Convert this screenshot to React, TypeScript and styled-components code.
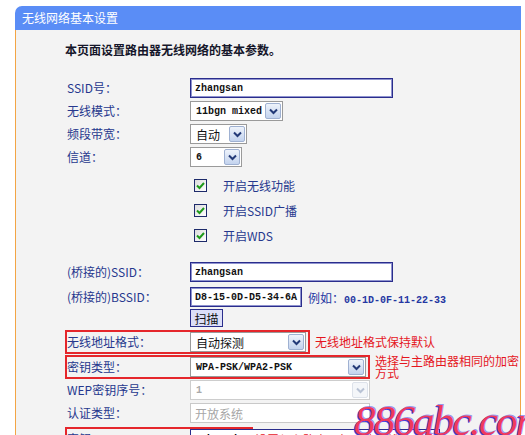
import React from "react";
import styled, {createGlobalStyle} from "styled-components";

const GlobalStyle = createGlobalStyle`
  html, body {
    margin: 0;
    padding: 0;
    background: #ffffff;
    height: 435px;
    overflow: hidden;
  }
`

const CJK = `"Noto Sans CJK SC", "DejaVu Sans", sans-serif`
const MONO = `"Liberation Mono", "DejaVu Sans Mono", monospace`

const Chevron = ({disabled = false}: {disabled?: boolean}) => (
    <svg width="9" height="7" viewBox="0 0 9 7">
        <polyline points="1,1.5 4.5,5 8,1.5" fill="none"
                  stroke={disabled ? "#b8c2d4" : "#233a78"} strokeWidth="2"/>
    </svg>
)

const Check = () => (
    <svg width="11" height="11" viewBox="0 0 11 11">
        <polyline points="2,5.5 4.5,8 9,3" fill="none" stroke="#1f9a1a" strokeWidth="2"/>
    </svg>
)

const Select = ({value, width, disabled = false, mono = false}:
                    {value: string, width: number, disabled?: boolean, mono?: boolean}) => (
    <SelectBox $width={width} $disabled={disabled}>
        <SelectValue $mono={mono} $disabled={disabled}>{value}</SelectValue>
        <ArrowButton $disabled={disabled}><Chevron disabled={disabled}/></ArrowButton>
    </SelectBox>
)

const Row = ({label, children, mark = false, note, noteWidth, mt = 3}:
                 {label: string, children?: React.ReactNode, mark?: boolean,
                     note?: string, noteWidth?: number, mt?: number}) => (
    <RowStyle $mt={mt}>
        <Field $mark={mark}>
            <Label>{label}</Label>
            {children}
        </Field>
        {note && <Note $width={noteWidth}>{note}</Note>}
    </RowStyle>
)

const CheckRow = ({label}: {label: string}) => (
    <CheckRowStyle>
        <CheckBox><Check/></CheckBox>
        <CheckLabel>{label}</CheckLabel>
    </CheckRowStyle>
)

const App = () => {
    return (
        <Page>
            <GlobalStyle/>
            <Panel>
                <Header>无线网络基本设置</Header>
                <Body>
                    <Intro>本页面设置路由器无线网络的基本参数。</Intro>
                    <Form>
                        <Row label="SSID号：" mt={20}>
                            <TextInput $width={203}>zhangsan</TextInput>
                        </Row>
                        <Row label="无线模式：">
                            <Select value="11bgn mixed" width={93} mono/>
                        </Row>
                        <Row label="频段带宽：">
                            <Select value="自动" width={57}/>
                        </Row>
                        <Row label="信道：">
                            <Select value="6" width={52} mono/>
                        </Row>
                        <Checks>
                            <CheckRow label="开启无线功能"/>
                            <CheckRow label="开启SSID广播"/>
                            <CheckRow label="开启WDS"/>
                        </Checks>
                        <Row label="(桥接的)SSID：" mt={15}>
                            <TextInput $width={203}>zhangsan</TextInput>
                        </Row>
                        <Row label="(桥接的)BSSID：" mt={5}>
                            <TextInput $width={112}>D8-15-0D-D5-34-6A</TextInput>
                            <Example>例如：<span>00-1D-0F-11-22-33</span></Example>
                        </Row>
                        <ButtonRow>
                            <ScanButton>扫描</ScanButton>
                        </ButtonRow>
                        <Row label="无线地址格式：" mark note="无线地址格式保持默认" mt={3}>
                            <Select value="自动探测" width={116}/>
                        </Row>
                        <Row label="密钥类型：" mark note="选择与主路由器相同的加密方式" noteWidth={146} mt={1}>
                            <Select value="WPA-PSK/WPA2-PSK" width={176} mono/>
                        </Row>
                        <Row label="WEP密钥序号：" mt={1}>
                            <Select value="1" width={180} mono disabled/>
                        </Row>
                        <Row label="认证类型：" mt={3}>
                            <TextInput $width={180} $disabled>开放系统</TextInput>
                        </Row>
                        <KeyRow>
                            <KeyField>
                                <Label>密钥：</Label>
                            </KeyField>
                            <KeyInput>
                                <span>a1b2c3d4</span>
                                <KeyNote>设置与主路由器相同的无线密码</KeyNote>
                            </KeyInput>
                        </KeyRow>
                    </Form>
                    <Watermark>886abc.com</Watermark>
                </Body>
            </Panel>
        </Page>
    )
}

const Page = styled.div`
  padding: 6px 0 0 15px;
  font-family: ${CJK};
`

const Panel = styled.div`
  width: 506px;
`

const Header = styled.div`
  height: 24px;
  line-height: 24px;
  padding-left: 7px;
  background: #5a8df6;
  border-top-left-radius: 7px;
  color: #ffffff;
  font-size: 12px;
`

const Body = styled.div`
  position: relative;
  height: 420px;
  padding: 12px 0 0 49px;
  background: #f3f3f3;
  border-left: 1px solid #f3a545;
  border-right: 1px solid #f3a545;
`

const Intro = styled.div`
  height: 16px;
  line-height: 16px;
  font-size: 12px;
  font-weight: 700;
  color: #15162a;
`

const Form = styled.div`
  display: flex;
  flex-direction: column;
`

const RowStyle = styled.div<{$mt: number}>`
  display: flex;
  align-items: center;
  margin-top: ${p => p.$mt}px;
`

const Field = styled.div<{$mark: boolean}>`
  display: flex;
  align-items: center;
  padding: ${p => p.$mark ? "0 2px 0 0" : "0 4px 0 2px"};
  border: ${p => p.$mark ? "2px solid #e5262b" : "none"};
`

const Label = styled.div`
  flex: 0 0 123px;
  height: 20px;
  font-size: 12px;
  line-height: 20px;
  color: #26388e;
  white-space: nowrap;
`

const Note = styled.div<{$width?: number}>`
  margin-left: 5px;
  width: ${p => p.$width ? `${p.$width}px` : "auto"};
  font-size: 12px;
  line-height: 12px;
  color: #e5161e;
`

const TextInput = styled.div<{$width: number, $disabled?: boolean}>`
  box-sizing: border-box;
  width: ${p => p.$width}px;
  height: 20px;
  padding: 0 4px;
  display: flex;
  align-items: center;
  background: #ffffff;
  border: 1px solid ${p => p.$disabled ? "#c9c9c9" : "#2a2d8c"};
  box-shadow: ${p => p.$disabled ? "none" : "inset 0 0 0 1px #8f93cf"};
  font-family: ${p => p.$disabled ? CJK : MONO};
  font-size: ${p => p.$disabled ? 12 : 10}px;
  font-weight: ${p => p.$disabled ? 400 : 700};
  color: ${p => p.$disabled ? "#a6a6a6" : "#111111"};
  white-space: nowrap;
`

const SelectBox = styled.div<{$width: number, $disabled: boolean}>`
  box-sizing: border-box;
  width: ${p => p.$width}px;
  height: 20px;
  display: flex;
  align-items: center;
  padding: 1px;
  background: #ffffff;
  border: 1px solid ${p => p.$disabled ? "#cdcdcd" : "#9a9a9a"};
`

const SelectValue = styled.div<{$mono: boolean, $disabled: boolean}>`
  flex: 1;
  padding-left: 4px;
  font-family: ${p => p.$mono ? MONO : CJK};
  font-size: ${p => p.$mono ? 10 : 12}px;
  font-weight: ${p => p.$mono ? 700 : 400};
  color: ${p => p.$disabled ? "#a9a9a9" : "#111111"};
  white-space: nowrap;
  overflow: hidden;
`

const ArrowButton = styled.div<{$disabled: boolean}>`
  box-sizing: border-box;
  flex: 0 0 16px;
  height: 16px;
  display: flex;
  align-items: center;
  justify-content: center;
  border: 1px solid ${p => p.$disabled ? "#dde2ea" : "#9fb1d2"};
  background: ${p => p.$disabled
          ? "#f4f6f9"
          : "linear-gradient(#eef3fb, #c3d3ee)"};
  border-radius: 2px;
`

const Checks = styled.div`
  display: flex;
  flex-direction: column;
  gap: 1px;
  margin-top: 6px;
  padding-left: 129px;
`

const CheckRowStyle = styled.div`
  height: 24px;
  display: flex;
  align-items: center;
  gap: 16px;
`

const CheckBox = styled.div`
  box-sizing: border-box;
  width: 13px;
  height: 13px;
  display: flex;
  align-items: center;
  justify-content: center;
  border: 1px solid #1d2a6a;
  background: linear-gradient(135deg, #dcdcdc, #ffffff);
`

const CheckLabel = styled.div`
  font-size: 12px;
  color: #26388e;
`

const Example = styled.div`
  margin-left: 6px;
  font-size: 12px;
  color: #2537a2;

  span {
    font-family: ${MONO};
    font-size: 10px;
    font-weight: 700;
  }
`

const ButtonRow = styled.div`
  margin-top: 2px;
  padding-left: 125px;
`

const ScanButton = styled.div`
  box-sizing: border-box;
  width: 33px;
  height: 18px;
  display: flex;
  align-items: center;
  justify-content: center;
  background: #dcdff8;
  border: 1px solid #2a2d8c;
  font-size: 12px;
  color: #111111;
`

const KeyRow = styled.div`
  display: flex;
  align-items: flex-start;
  margin-top: 4px;
  position: relative;
`

const KeyField = styled.div`
  box-sizing: border-box;
  width: 188px;
  height: 24px;
  border: 2px solid #e5262b;
`

const KeyInput = styled.div`
  box-sizing: border-box;
  position: absolute;
  left: 125px;
  top: 2px;
  width: 250px;
  height: 20px;
  display: flex;
  align-items: center;
  gap: 12px;
  padding: 0 4px;
  background: #ffffff;
  border: 1px solid #2a2d8c;
  font-family: ${MONO};
  font-size: 10px;
  font-weight: 700;
`

const KeyNote = styled.span`
  font-family: ${CJK};
  font-size: 12px;
  font-weight: 400;
  color: #e5161e;
`

const Watermark = styled.div`
  position: absolute;
  left: 338px;
  top: 366px;
  font-family: "Liberation Serif", serif;
  font-style: italic;
  font-size: 43px;
  letter-spacing: -1.8px;
  color: #ef3a5e;
  text-shadow: -1px 1px 0 #3a3ee0, 1px -1px 0 rgba(58, 62, 224, 0.5);
  pointer-events: none;
`

export default App
